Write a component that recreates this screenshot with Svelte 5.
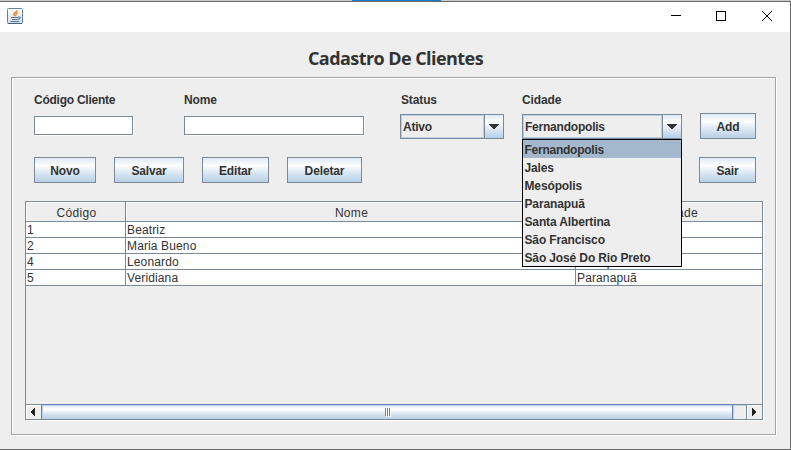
<script>
  const cities = ['Fernandopolis', 'Jales', 'Mesópolis', 'Paranapuã', 'Santa Albertina', 'São Francisco', 'São José Do Rio Preto'];
  const rows = [
    ['1', 'Beatriz', 'Fernandopolis'],
    ['2', 'Maria Bueno', 'Jales'],
    ['4', 'Leonardo', 'Mesópolis'],
    ['5', 'Veridiana', 'Paranapuã']
  ];
  let code = $state('');
  let name = $state('');
  let selected = $state('Fernandopolis');
</script>

{#snippet arrow()}
  <span class="drop">
    <svg width="10" height="5" shape-rendering="crispEdges"><path d="M0 0h10v1H0zM1 1h8v1H1zM2 2h6v1H2zM3 3h4v1H3zM4 4h2v1H4z" fill="#333" /></svg>
  </span>
{/snippet}

<div class="screen">
  <div class="backdrop"><i></i></div>
  <div class="window">
    <header>
      <svg class="java" width="16" height="16" viewBox="0 0 16 16">
        <defs><linearGradient id="jg" x2="0" y2="1"><stop stop-color="#fdfdfd" /><stop offset="1" stop-color="#d5dce2" /></linearGradient></defs>
        <rect x=".5" y=".5" width="15" height="15" rx="1" fill="url(#jg)" stroke="#64839c" />
        <path d="M1 15.5h14" stroke="#3f6380" />
        <path d="M10.300 2.300C9.500 4.500 5.200 4.800 7.400 8M10.600 4.800C8 5.500 9.700 6.600 8.300 8.200" fill="none" stroke="#e88830" stroke-width="1.400" />
        <path d="M4 9.500h7M5 11.500h5.500M3.500 13.500h8.500M11 9.200c3.200-.9 2.600 1.800-.3 2.300" fill="none" stroke="#58789a" stroke-width="1.100" />
      </svg>
      <div class="controls">
        <svg width="10" height="10" shape-rendering="crispEdges"><path d="M0 4h10v1H0z" /></svg>
        <svg width="10" height="10" shape-rendering="crispEdges"><path d="M.5.5h9v9h-9z" fill="none" stroke="#000" /></svg>
        <svg width="10" height="10"><path d="M0 0l10 10M10 0L0 10" fill="none" stroke="#000" /></svg>
      </div>
    </header>
    <h1>Cadastro De Clientes</h1>
    <main>
      <div class="fields">
        <label class="f-code"><span>Código Cliente</span><input bind:value={code} /></label>
        <label class="f-name"><span>Nome</span><input bind:value={name} /></label>
        <div class="f-status"><span>Status</span><div class="combo"><b>Ativo</b>{@render arrow()}</div></div>
        <div class="f-city">
          <span>Cidade</span>
          <div class="combo"><b>{selected}</b>{@render arrow()}</div>
          <ul>
            {#each cities as city}
              <li class:active={city === selected}>{city}</li>
            {/each}
          </ul>
        </div>
        <button class="add">Add</button>
      </div>
      <div class="actions">
        <button class="b1">Novo</button>
        <button class="b2">Salvar</button>
        <button class="b3">Editar</button>
        <button class="b4">Deletar</button>
        <button class="exit">Sair</button>
      </div>
      <section>
        <div class="tr head"><div>Código</div><div>Nome</div><div>Cidade</div></div>
        {#each rows as row}
          <div class="tr">{#each row as cell}<div>{cell}</div>{/each}</div>
        {/each}
        <div class="scroll">
          <span class="sb left"><svg width="4" height="8" shape-rendering="crispEdges"><path d="M3 0h1v8H3zM2 1h1v6H2zM1 2h1v4H1zM0 3h1v2H0z" fill="#222" /></svg></span>
          <span class="thumb"><i></i><i></i><i></i></span>
          <span class="track"></span>
          <span class="sb right"><svg width="4" height="8" shape-rendering="crispEdges"><path d="M0 0h1v8H0zM1 1h1v6H1zM2 2h1v4H2zM3 3h1v2H3z" fill="#222" /></svg></span>
        </div>
      </section>
    </main>
  </div>
</div>

<style>
  .screen, .screen * { box-sizing: border-box; }
  .screen {
    width: 791px; height: 450px; overflow: hidden; background: #eee; color: #333;
    font-family: "Liberation Sans", Arial, sans-serif; font-size: 12px;
  }
  .backdrop { height: 1px; background: #c8c8c8; display: flex; justify-content: center; }
  .backdrop i { width: 89px; height: 1px; background: #1979ca; margin-left: 2px; }
  .window { height: 449px; border: solid #6b6b6b; border-width: 1px 1px 1px 0; }
  header { height: 30px; background: #fff; display: flex; justify-content: space-between; padding: 6px 18px 0 7px; }
  .controls { display: flex; gap: 36px; padding-top: 3px; }
  .controls svg:first-child { margin-right: -1px; }
  h1 {
    margin: 0; height: 45px; padding-top: 14px; text-align: center; font: bold 18px/25px "Open Sans", "Noto Sans", sans-serif;
    white-space: nowrap; letter-spacing: -.56px; padding-left: 1px;
  }
  main { width: 765px; height: 358px; margin-left: 11px; border: 1px solid #a3a3a3; box-shadow: 1px 1px #fff, inset 1px 1px #fff; padding-left: 13px; }
  .fields { display: flex; height: 79px; padding: 15px 0 0 9px; font-weight: bold; letter-spacing: -.13px; }
  .fields label > span, .fields div > span:first-child { display: block; line-height: 14px; }
  .fields .f-code > span { letter-spacing: -.25px; }
  .fields .f-status > span { padding-left: 1px; }
  input { display: block; width: 100%; height: 19px; margin: 9px 0 0; border: 1px solid #7a8a99; border-radius: 0; box-shadow: 1px 1px #fff; background: #fff; outline: 0; padding: 0; }
  .f-code { width: 99px; margin-right: 51px; }
  .f-name { width: 180px; margin-right: 36px; }
  .f-status { width: 104px; margin-right: 18px; }
  .f-city { width: 160px; margin-right: 18px; position: relative; }
  .combo { display: flex; height: 25px; margin-top: 7px; border: 1px solid #7a8a99; }
  .combo b { flex: 1; border: 1px solid #b8cfe5; line-height: 23px; padding-left: 1px; letter-spacing: -.22px; }
  .drop { width: 19px; border-left: 1px solid #7a8a99; display: flex; align-items: center; justify-content: center; }
  .drop, button, .thumb { background: linear-gradient(#dde8f3 0%, #fff 30%, #dde8f3 60%, #b8cfe5 100%); }
  ul { position: absolute; z-index: 2; top: 46px; left: 0; width: 160px; height: 128px; margin: 0; padding: 0; list-style: none; background: #eee; border: 1px solid #000; }
  li { height: 18px; line-height: 20px; padding-left: 1.5px; white-space: nowrap; letter-spacing: -.13px; }
  li.active { background: #a3b8cc; letter-spacing: -.25px; }
  button { height: 26px; padding: 2px 0 0; border: 1px solid #7a8a99; border-radius: 0; font: bold 12px "Liberation Sans", Arial, sans-serif; color: #333; letter-spacing: -.13px; }
  .add { width: 56px; margin-top: 20px; }
  .actions { display: flex; height: 44px; padding-left: 9px; }
  .b1 { width: 62px; margin-right: 18px; }
  .b2 { width: 70px; margin-right: 18px; }
  .b3 { width: 67px; margin-right: 18px; }
  .b4 { width: 75px; }
  .exit { width: 57px; margin: 0 19px 0 auto; }
  section { display: flex; flex-direction: column; width: 738px; height: 219px; border: 1px solid #7a8a99; box-shadow: 1px 1px #fff; }
  .tr { display: flex; height: 16px; background: #fff; border-bottom: 1px solid #7a8a99; line-height: 17px; letter-spacing: .13px; overflow: hidden; }
  .tr div { flex: none; width: 100px; padding-left: 1px; border-right: 1px solid #7a8a99; white-space: nowrap; }
  .tr div:nth-child(2) { width: 450px; }
  .tr div:nth-child(3) { width: 202px; border-right: 0; }
  .head { height: 20px; background: #eee; line-height: 22px; text-align: center; letter-spacing: .3px; }
  .head div { padding-left: 2px; box-shadow: inset 1px 1px #fff; }
  .scroll { display: flex; margin: auto 0 -1px; border: solid #7a8a99; border-width: 1px 0; height: 16px; }
  .sb { display: flex; align-items: center; justify-content: center; width: 15px; box-shadow: inset 1px 1px #fff; }
  .left { padding-right: 2px; }
  .thumb { width: 692px; margin-top: -1px; border: solid #6382bf; border-width: 1px 1px 0; display: flex; align-items: center; justify-content: center; gap: 1px; box-shadow: inset 1px 1px #b8cfe5; }
  .thumb i { width: 1px; height: 8px; background: #6382bf; box-shadow: 1px 1px #fff; }
  .track { width: 13px; box-shadow: inset 1px 1px #b8cfe5; }
  .right { width: 16px; border-left: 1px solid #7a8a99; padding-right: 1px; }
</style>
